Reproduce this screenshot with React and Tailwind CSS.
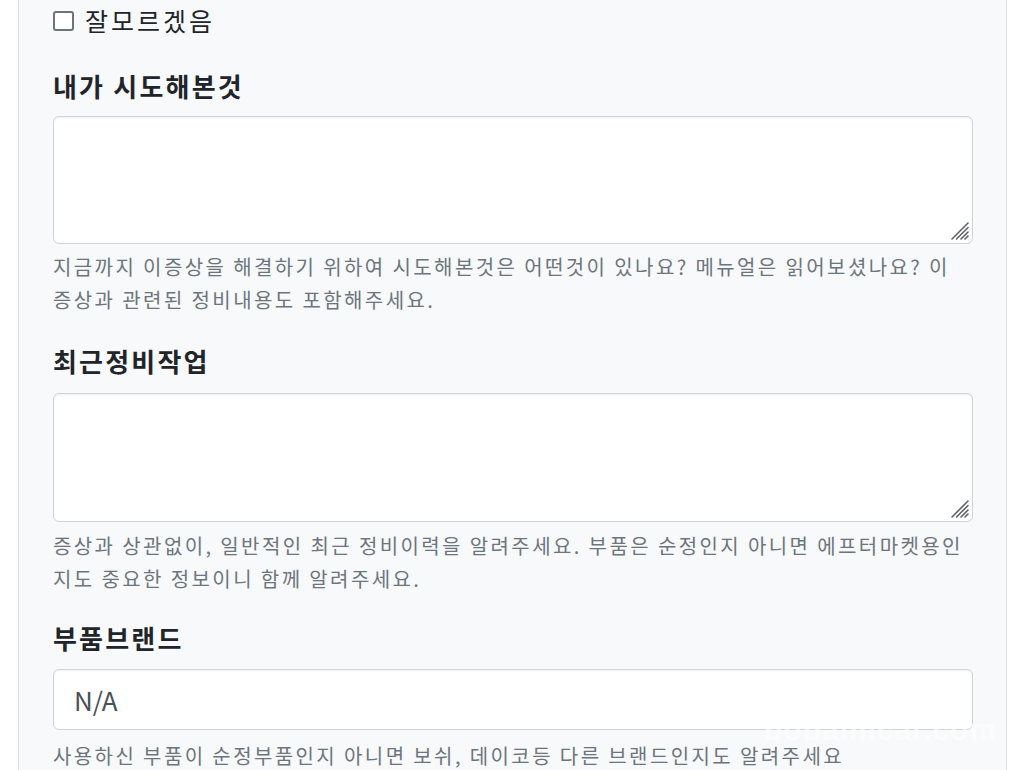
const font = { fontFamily: '"Noto Sans CJK KR", "Noto Sans", sans-serif' }

function Grip() {
  return (
    <svg className="pointer-events-none absolute bottom-[3px] right-[3px]" width="22" height="22" viewBox="0 0 22 22">
      <g stroke="#5f6368" strokeWidth="1.6" strokeLinecap="round">
        <line x1="20" y1="4" x2="4" y2="20" />
        <line x1="20" y1="8.5" x2="8.5" y2="20" />
        <line x1="20" y1="13" x2="13" y2="20" />
        <line x1="20" y1="17" x2="17" y2="20" />
      </g>
    </svg>
  )
}

function Area({ top, h }) {
  return (
    <div className={`relative ${top}`}>
      <textarea className={`block w-full resize-none rounded-[6px] border border-[#ced4da] bg-white shadow-[inset_0_1px_2px_rgba(0,0,0,0.06)] outline-none ${h}`} />
      <Grip />
    </div>
  )
}

function Field({ label, help, children, top }) {
  return (
    <div className={top}>
      <h3 className="text-[26px] font-bold leading-[32px] tracking-[2.2px] text-[#212529]">{label}</h3>
      {children}
      {help}
    </div>
  )
}

export default function App() {
  return (
    <div className="min-h-[770px] bg-white" style={font}>
      <div className="relative mx-[18px] w-[989px] overflow-hidden border-x border-b border-[#dfe2e5] bg-[#f8f9fa] pl-[34px] pr-[33px] pt-[5px] pb-[40px]">
        <label className="flex h-[32px] items-center gap-[11px] text-[25px] tracking-[3px] text-[#212529]">
          <span className="inline-block h-[20px] w-[21px] rounded-[3px] border-2 border-[#6f7477] bg-white" />
          잘모르겠음
        </label>

        <Field
          top="mt-[33px]"
          label="내가 시도해본것"
          help={
            <p className="mt-[6px] text-[20px] leading-[33px] tracking-[2.4px] text-[#6c757d]">
              지금까지 이증상을 해결하기 위하여 시도해본것은 어떤것이 있나요? 메뉴얼은 읽어보셨나요? 이 증상과 관련된 정비내용도 포함해주세요.
            </p>
          }
        >
          <Area top="mt-[14px]" h="h-[128px]" />
        </Field>

        <Field
          top="mt-[29px]"
          label="최근정비작업"
          help={
            <p className="mt-[7px] text-[20px] leading-[33px] tracking-[2.4px] text-[#6c757d]">
              증상과 상관없이, 일반적인 최근 정비이력을 알려주세요. 부품은 순정인지 아니면 에프터마켓용인지도 중요한 정보이니 함께 알려주세요.
            </p>
          }
        >
          <Area top="mt-[16px]" h="h-[129px]" />
        </Field>

        <Field
          top="mt-[27px]"
          label="부품브랜드"
          help={
            <p className="mt-[9px] text-[20px] leading-[33px] tracking-[2.4px] text-[#6c757d]">
              사용하신 부품이 순정부품인지 아니면 보쉬, 데이코등 다른 브랜드인지도 알려주세요
            </p>
          }
        >
          <input
            defaultValue="N/A"
            className="mt-[15px] block h-[61px] w-full rounded-[6px] border border-[#ced4da] bg-white px-[20px] text-[26px] text-[#495057] shadow-[inset_0_1px_2px_rgba(0,0,0,0.06)] outline-none"
          />
        </Field>
      </div>

      <div className="pointer-events-none absolute left-[764px] top-[713px] text-[30px] font-bold leading-[34px] tracking-[1px] text-white/60" style={{ fontFamily: '"Liberation Sans", sans-serif' }}>
        bobaimcar.com
      </div>
    </div>
  )
}
